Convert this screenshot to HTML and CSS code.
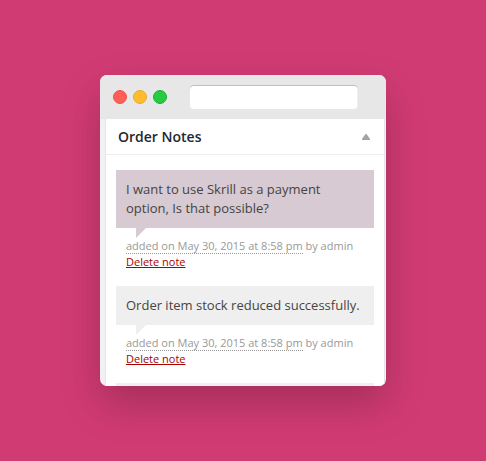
FILE: index.html
```html
<!DOCTYPE html>
<html lang="en">
<head>
<meta charset="utf-8">
<title>Order Notes</title>
<link rel="stylesheet" href="styles.css">
</head>
<body>
<main class="window">
  <header class="titlebar">
    <span class="dot dot-close"></span>
    <span class="dot dot-minimize"></span>
    <span class="dot dot-zoom"></span>
    <div class="address"></div>
  </header>
  <div class="viewport">
    <section class="panel">
      <div class="panel-header">
        <h2>Order Notes</h2>
        <svg class="toggle" width="8" height="6" viewBox="0 0 8 6"><path d="M3.5 0h1L8 5v1H0V5z" fill="#a0a5aa"/></svg>
      </div>
      <ul class="notes">
        <li>
          <div class="bubble bubble-customer">I want to use Skrill as a payment<br>option, Is that possible?</div>
          <p class="meta"><abbr>added on May 30, 2015 at 8:58 pm</abbr> by admin<br><a href="#">Delete note</a></p>
        </li>
        <li>
          <div class="bubble">Order item stock reduced successfully.</div>
          <p class="meta"><abbr>added on May 30, 2015 at 8:58 pm</abbr> by admin<br><a href="#">Delete note</a></p>
        </li>
        <li>
          <div class="bubble"></div>
        </li>
      </ul>
    </section>
  </div>
</main>
</body>
</html>
```
FILE: styles.css
```css
* { box-sizing: border-box; }

body {
  margin: 0;
  height: 461px;
  padding: 75px 100px;
  overflow: hidden;
  background: #d13b73;
  font-family: "Open Sans", "Noto Sans", sans-serif;
}

.window {
  display: flex;
  flex-direction: column;
  width: 286px;
  height: 311px;
  overflow: hidden;
  border-radius: 7px;
  background: #f1f1f1;
  box-shadow: 0 18px 40px rgba(0, 0, 0, 0.21);
}

.titlebar {
  display: flex;
  flex: none;
  align-items: center;
  gap: 6px;
  height: 44px;
  padding-left: 13px;
  background: #e7e7e7;
}

.dot {
  width: 14px;
  height: 14px;
  border: 1px solid;
  border-radius: 50%;
}

.dot-close { background: #ff5f57; border-color: #f0524c; }
.dot-minimize { background: #ffbd2e; border-color: #e6a935; }
.dot-zoom { background: #28ca41; border-color: #1db336; }

.address {
  width: 168px;
  height: 24px;
  margin-left: 17px;
  border-radius: 4px;
  background: #fff;
  box-shadow: inset 0 1px 0 #bdbdbd, inset -1px 0 0 #f0f0f0;
}

.viewport {
  flex: 1;
  min-height: 0;
  padding: 0 1px 0 5px;
}

.panel {
  height: 100%;
  overflow: hidden;
  border: solid #e5e5e5;
  border-width: 0 1px;
  background: #fff;
}

.panel-header {
  display: flex;
  align-items: center;
  justify-content: space-between;
  height: 36px;
  padding: 0 14px 0 12px;
  border-bottom: 1px solid #eee;
}

.panel-header h2 {
  margin: 0;
  color: #23282d;
  font-size: 14px;
  font-weight: 600;
  line-height: 20px;
}

.toggle { display: block; margin-top: 1px; }

.notes {
  margin: 0;
  padding: 15px 10px 0;
  list-style: none;
}

.bubble {
  position: relative;
  min-height: 39px;
  padding: 10px 10px 9px;
  background: #efefef;
  color: #444;
  font-size: 13px;
  line-height: 19px;
}

.bubble-customer {
  height: 58px;
  background: #d7cad2;
}

.bubble::after {
  content: "";
  position: absolute;
  top: 100%;
  left: 20px;
  width: 10px;
  height: 10px;
  background: inherit;
  clip-path: polygon(0 0, 100% 0, 0 100%);
}

.meta {
  height: 58px;
  margin: 0;
  padding: 10px 10px 0;
  color: #999;
  font-size: 11px;
  line-height: 16px;
}

.meta abbr { border-bottom: 1px dotted #999; }

.meta a { color: #a00; }
```
